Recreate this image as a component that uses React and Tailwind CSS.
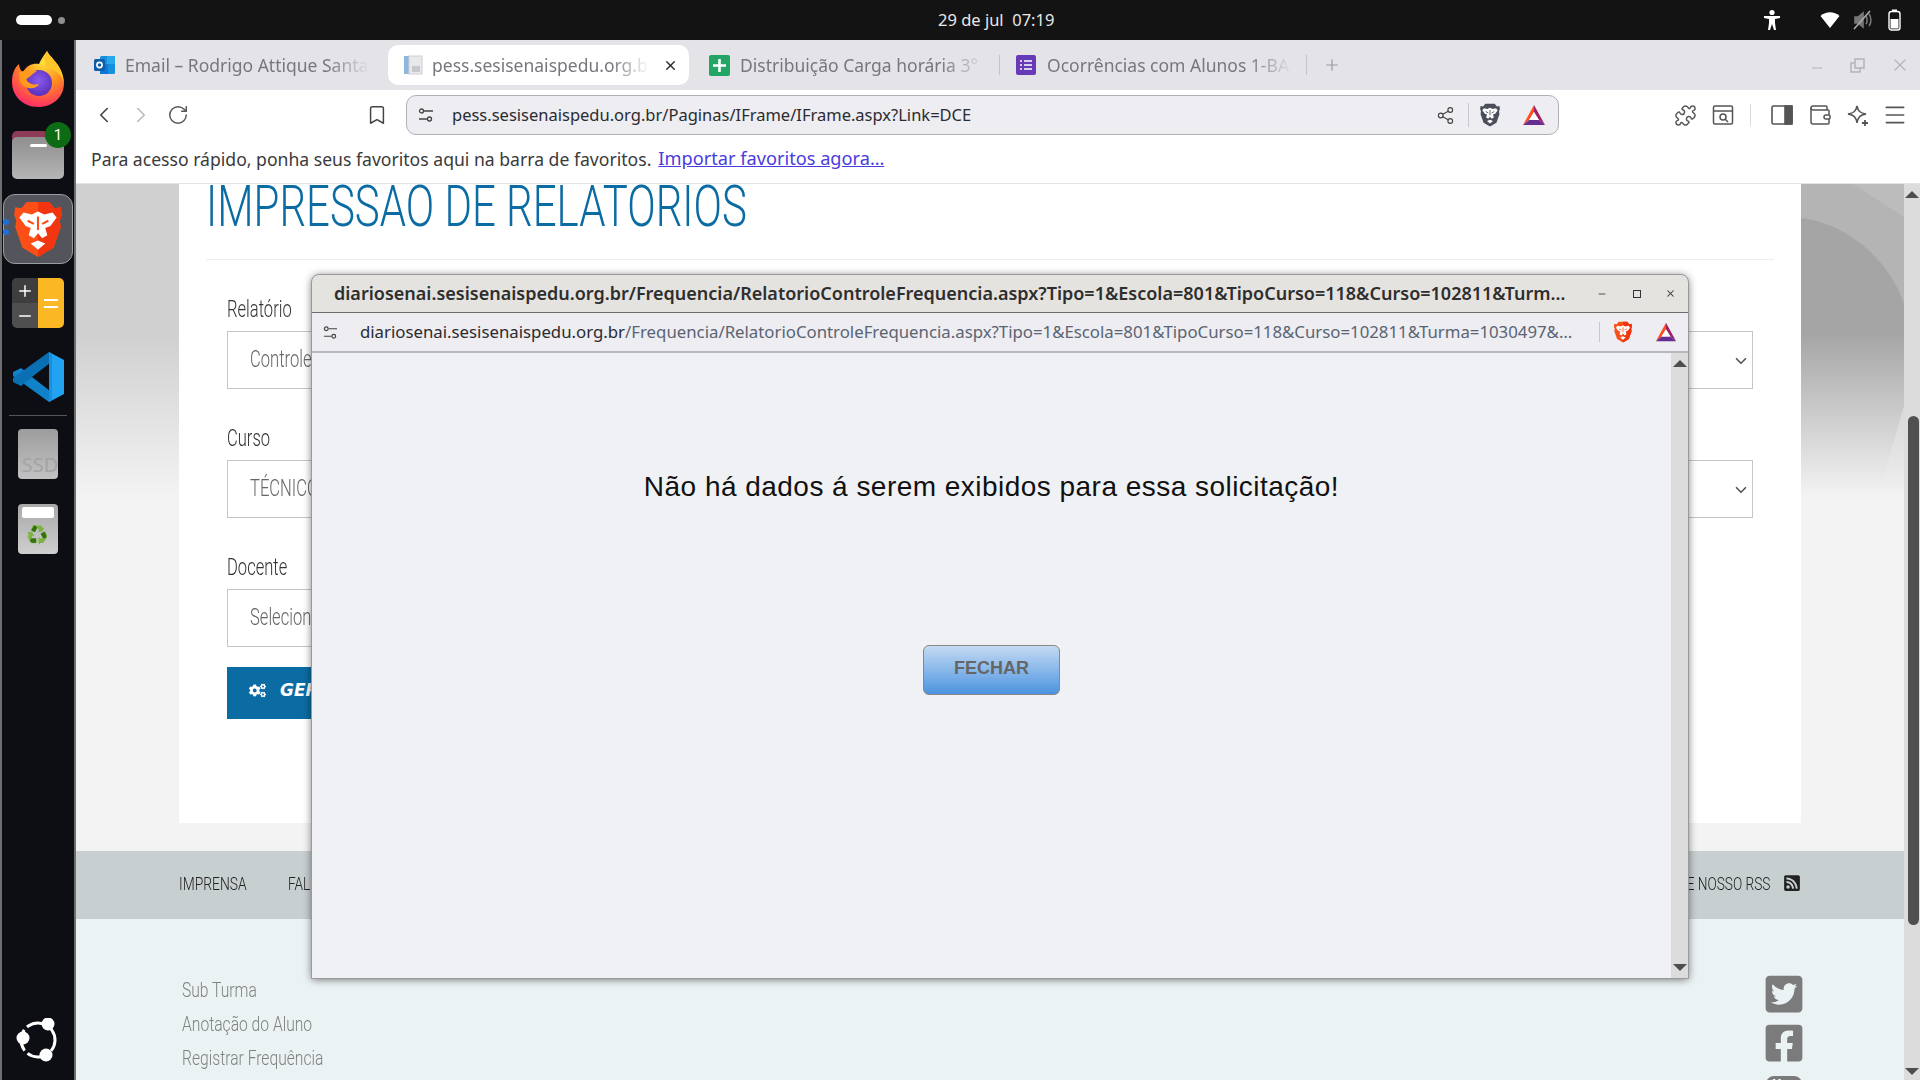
import React from "react";
import { ChevronLeft, ChevronRight, RotateCw, Bookmark, Share2, Puzzle, Wallet, Menu, X, Minus, Plus, ChevronDown } from "lucide-react";
import { FaTwitterSquare, FaFacebookSquare, FaRssSquare, FaCogs } from "react-icons/fa";

const ui = "font-['Noto_Sans',sans-serif]";
const narrow = "font-['Roboto',sans-serif] font-light";

function Narrow({ children, scale = "[transform:scaleX(0.72)]", className = "" }) {
  return <span className={`inline-block origin-left whitespace-nowrap ${scale} ${className}`}>{children}</span>;
}

function BraveLion({ size = 48, mono = false, cls = "" }) {
  const fill = mono ? "#4a4d5a" : "#fb4f17";
  return (
    <svg width={size} height={size} viewBox="0 0 48 56" className={cls}>
      <path d="M13 2 L35 2 L40 8 L46 7 L47 14 L45 20 L46 26 L39 46 L24 55 L9 46 L2 26 L3 20 L1 14 L2 7 L8 8 Z" fill={fill} />
      {!mono && <path d="M24 2 L35 2 L40 8 L46 7 L47 14 L45 20 L46 26 L39 46 L24 55 Z" fill="#f0350f" />}
      <path d="M24 11 L30 14 L38 12 L42 17 L36 25 L31 27 L33 34 L28 37 L24 32 L20 37 L15 34 L17 27 L12 25 L6 17 L10 12 L18 14 Z" fill="#fff" />
      <path d="M24 39 L31 42 L24 48 L17 42Z" fill="#fff" />
      <path d="M24 16 L24 29 M14 20 L20 23 M34 20 L28 23" stroke={fill} strokeWidth="2" fill="none" />
    </svg>
  );
}

function Bat({ size = 22, cls = "" }) {
  return (
    <svg width={size} height={size} viewBox="0 0 24 22" className={cls}>
      <polygon points="12,1 1,21 8,15 12,8" fill="#ff4f1f" />
      <polygon points="12,1 23,21 16,15 12,8" fill="#9e1f63" />
      <polygon points="1,21 23,21 17,16 7,16" fill="#662d91" />
      <polygon points="12,8 7,16 17,16" fill="#fff" />
    </svg>
  );
}

function SiteSettings({ size = 16 }) {
  return (
    <svg width={size} height={size} viewBox="0 0 16 16" fill="none" stroke="#444" strokeWidth="1.3">
      <circle cx="3.5" cy="4" r="2" />
      <path d="M6 4h9M1 12h8" />
      <circle cx="11.5" cy="12" r="2" />
    </svg>
  );
}

function Firefox() {
  return (
    <svg width="54" height="56" viewBox="0 0 54 56">
      <defs>
        <radialGradient id="ffa" cx="0.6" cy="0.2" r="0.95">
          <stop offset="0" stopColor="#ffe03a" />
          <stop offset="0.45" stopColor="#ff8a1f" />
          <stop offset="0.8" stopColor="#ff3a5c" />
          <stop offset="1" stopColor="#e3198c" />
        </radialGradient>
        <radialGradient id="ffb" cx="0.5" cy="0.4" r="0.6">
          <stop offset="0" stopColor="#8a5bf0" />
          <stop offset="1" stopColor="#5a2fb8" />
        </radialGradient>
      </defs>
      <path d="M36 0 C40 8 52 14 53 32 C53 46 42 56 27 56 C12 56 1 45 1 31 C1 24 3 17 8 13 C8 17 10 20 12 21 C16 14 22 12 28 13 C30 8 33 4 36 0Z" fill="url(#ffa)" />
      <circle cx="28" cy="32" r="13" fill="url(#ffb)" />
      <path d="M8 22 C14 18 20 20 26 20 C20 24 18 27 15 28 C18 34 24 34 28 33 C24 40 12 38 9 30Z" fill="#ff9a1f" />
      <path d="M36 0 C40 8 52 14 53 32 C51 24 44 18 36 17 C33 12 33 6 36 0Z" fill="#ffc629" />
    </svg>
  );
}

function Dock() {
  return (
    <div className="w-[76px] h-full shrink-0 flex flex-col items-center bg-[#0d0e13] border-x-2 border-[#6e6e6e]">
      <div className="mt-[10px] h-[58px] flex items-center justify-center"><Firefox /></div>
      <div className="relative mt-[23px] w-[52px] h-[48px]">
        <div className="absolute left-0 top-0 w-[36px] h-[14px] rounded-t-[5px] bg-[#8e3b57]" />
        <div className="absolute left-0 top-[6px] w-[52px] h-[42px] rounded-[5px] bg-gradient-to-b from-[#8f8f8f] to-[#b5b5b5] flex justify-center">
          <div className="mt-[7px] w-[17px] h-[3px] rounded bg-white" />
        </div>
        <div className="absolute -right-[7px] -top-[9px] w-[26px] h-[26px] rounded-full bg-[#0d6b14] text-white text-[15px] flex items-center justify-center font-['Roboto',sans-serif]">1</div>
      </div>
      <div className="relative mt-[15px] w-[70px] h-[70px] rounded-[12px] bg-[#54555c] border border-[#9b9ca2] flex items-center justify-center">
        <BraveLion size={58} />
        <div className="absolute -left-[1px] top-[24px] w-[6px] h-[6px] rounded-full bg-[#1c71d8]" />
        <div className="absolute -left-[1px] top-[34px] w-[6px] h-[6px] rounded-full bg-[#1c71d8]" />
      </div>
      <div className="mt-[14px] w-[52px] h-[50px] rounded-[5px] overflow-hidden flex">
        <div className="w-[26px] flex flex-col text-white text-center bg-[#4f4f4f]">
          <div className="h-[25px] bg-[#3e3e3e] flex items-center justify-center"><Plus size={18} strokeWidth={2} /></div>
          <div className="h-[25px] flex items-center justify-center"><Minus size={18} strokeWidth={2} /></div>
        </div>
        <div className="w-[26px] bg-[#fbb824] flex flex-col items-center justify-center gap-[5px]">
          <div className="w-[14px] h-[2px] bg-white" />
          <div className="w-[14px] h-[2px] bg-white" />
        </div>
      </div>
      <div className="mt-[23px] h-[52px] flex items-center justify-center">
        <svg width="52" height="50" viewBox="0 0 52 50">
          <polygon points="37,50 37,38 9,16 1,20 1,24 " fill="#1082c9" />
          <polygon points="37,0 37,12 9,34 1,30 1,26 " fill="#0b6fb3" />
          <polygon points="37,12 37,38 20,25" fill="#0d0e13" />
          <polygon points="37,0 52,8 52,42 37,50" fill="#22a3f1" />
          <polygon points="37,0 40,2 40,48 37,50" fill="#1a90dc" />
        </svg>
      </div>
      <div className="mt-[12px] w-[58px] h-px bg-[#555]" />
      <div className="mt-[13px] w-[40px] h-[50px] rounded-[4px] bg-gradient-to-b from-[#9d9d9d] to-[#c2c2c2] flex items-end justify-center overflow-hidden">
        <span className="ml-[4px] text-[#a4a4a4] text-[20px] leading-[28px] font-['Noto_Sans',sans-serif]">SSD</span>
      </div>
      <div className="mt-[25px] w-[40px] h-[50px] rounded-[4px] bg-gradient-to-b from-[#a8a8a8] to-[#cfcfcf] flex flex-col items-center">
        <div className="mt-[3px] w-[32px] h-[11px] bg-white rounded-[2px]" />
        <span className="mt-[5px] text-[#2a8f2a] text-[18px] leading-[22px]">♻</span>
      </div>
      <div className="mt-auto mb-[18px]">
        <svg width="44" height="44" viewBox="0 0 44 44">
          <circle cx="22" cy="22" r="17" fill="none" stroke="#fff" strokeWidth="3" strokeDasharray="22 4" transform="rotate(-35 22 22)" />
          <circle cx="7" cy="20" r="6.5" fill="#fff" />
          <circle cx="32" cy="6" r="6.5" fill="#fff" />
          <circle cx="30" cy="37" r="6.5" fill="#fff" />
        </svg>
      </div>
    </div>
  );
}

function TopBar() {
  return (
    <div className="h-[40px] shrink-0 bg-[#131313] flex items-center pl-[16px] pr-[19px] text-white">
      <div className="w-[36px] h-[10px] rounded-full bg-white" />
      <div className="ml-[6px] w-[7px] h-[7px] rounded-full bg-[#8f8f8f]" />
      <div className={`ml-[873px] w-[130px] text-[16.5px] text-[#e8e8e8] ${ui} whitespace-nowrap`}>29 de jul&nbsp; 07:19</div>
      <div className="ml-auto flex items-center">
        <svg width="18" height="22" viewBox="0 0 18 22" fill="#fff">
          <circle cx="9" cy="3.5" r="2.6" />
          <path d="M1 7h16v2l-5 1v4l1 7h-2l-2-6-2 6H5l1-7v-4L1 9z" />
        </svg>
        <svg className="ml-[39px]" width="20" height="18" viewBox="0 0 20 18">
          <path d="M0.5 5 C6 0 14 0 19.5 5 L10 17Z" fill="#fff" />
        </svg>
        <svg className="ml-[13px]" width="20" height="20" viewBox="0 0 20 20" fill="none" stroke="#777" strokeWidth="1.6">
          <path d="M2 7h3l5-4v14l-5-4H2z" fill="#777" />
          <path d="M13 6c1.5 2 1.5 6 0 8M16 4c2.5 3 2.5 9 0 12" />
          <path d="M1 19L17 1" stroke="#aaa" />
        </svg>
        <svg className="ml-[15px]" width="13" height="22" viewBox="0 0 13 22" fill="none">
          <rect x="1" y="2.5" width="11" height="18.5" rx="2.5" stroke="#fff" strokeWidth="1.4" />
          <rect x="4" y="0.5" width="5" height="2" fill="#fff" />
          <rect x="2.5" y="10" width="8" height="9.5" fill="#fff" />
        </svg>
      </div>
    </div>
  );
}

function Tab({ icon, label, active, w, textW, sep, gap = "ml-[10px]" }) {
  return (
    <div className={`h-[40px] shrink-0 flex items-center ${w} ${active ? "bg-white rounded-[10px]" : ""} pl-[14px] relative`}>
      {icon}
      <span className={`${gap} ${textW} overflow-hidden whitespace-nowrap text-[17.5px] text-[#77777d] ${ui} [mask-image:linear-gradient(to_right,black_82%,transparent)]`}>{label}</span>
      {active && <X size={15} strokeWidth={2.4} className="ml-[13px] text-[#333]" />}
      {sep && <div className="absolute right-0 top-[10px] w-px h-[20px] bg-[#c4c4ca]" />}
    </div>
  );
}

function TabStrip() {
  return (
    <div className="h-[50px] shrink-0 bg-[#e3e3e8] flex items-center pl-[16px] pr-[10px]">
      <div className="flex items-center w-[296px]">
        <Tab
          w="w-[296px]"
          textW="w-[245px]"
          label="Email – Rodrigo Attique Santa"
          icon={
            <svg width="21" height="20" viewBox="0 0 21 20" className="shrink-0 -ml-[12px]">
              <rect x="6" y="1" width="15" height="18" rx="1.5" fill="#1490df" />
              <rect x="13" y="1" width="8" height="8" fill="#28a8ea" />
              <rect x="6" y="9" width="8" height="10" fill="#0f78d4" />
              <rect x="0" y="4" width="11" height="12" rx="1.5" fill="#0f5ca8" />
              <circle cx="5.5" cy="10" r="2.6" fill="none" stroke="#fff" strokeWidth="1.6" />
            </svg>
          }
        />
      </div>
      <Tab
        active
        w="w-[301px]"
        textW="w-[218px]"
        gap="ml-[8px]"
        label="pess.sesisenaispedu.org.b"
        icon={
          <svg width="22" height="22" viewBox="0 0 22 22" className="shrink-0">
            <rect x="2" y="2" width="5" height="18" fill="#8fb6dc" />
            <rect x="7" y="2" width="13" height="18" fill="#e9e9ec" stroke="#cfcfd4" />
            <rect x="10" y="12" width="8" height="6" fill="#c8c8cc" />
          </svg>
        }
      />
      <Tab
        w="w-[311px]"
        textW="w-[245px]"
        label="Distribuição Carga horária 3°"
        sep
        icon={
          <svg width="21" height="21" viewBox="0 0 21 21" className="shrink-0 ml-[6px]">
            <rect width="21" height="21" rx="2" fill="#23a566" />
            <path d="M4 10.5h13M10.5 4v13" stroke="#fff" strokeWidth="2.6" fill="none" />
          </svg>
        }
      />
      <Tab
        w="w-[307px]"
        textW="w-[245px]"
        gap="ml-[11px]"
        label="Ocorrências com Alunos 1-BA"
        sep
        icon={
          <svg width="20" height="20" viewBox="0 0 20 20" className="shrink-0 ml-[2px]">
            <rect width="20" height="20" rx="2" fill="#673ab7" />
            <path d="M8 6h8M8 10h8M8 14h8" stroke="#fff" strokeWidth="1.6" />
            <path d="M4 6h2M4 10h2M4 14h2" stroke="#fff" strokeWidth="1.6" />
          </svg>
        }
      />
      <Plus size={18} strokeWidth={1.6} className="ml-[16px] text-[#9a9aa0]" />
      <div className="ml-auto flex items-center gap-[25px] text-[#b4b4b8]">
        <Minus size={16} strokeWidth={1.5} className="mt-[6px]" />
        <svg width="15" height="15" viewBox="0 0 15 15" fill="none" stroke="#b4b4b8" strokeWidth="1.5">
          <rect x="5" y="1" width="9" height="9" />
          <path d="M5 5H1v9h9v-4" />
        </svg>
        <X size={20} strokeWidth={1.4} />
      </div>
    </div>
  );
}

function Toolbar() {
  return (
    <div className="h-[45px] shrink-0 bg-white flex items-center pl-[15px] pt-[5px] text-[#555]">
      <ChevronLeft size={26} strokeWidth={1.5} className="text-[#444]" />
      <ChevronRight size={26} strokeWidth={1.5} className="ml-[11px] text-[#bbb]" />
      <RotateCw size={22} strokeWidth={1.6} className="ml-[13px] text-[#555]" />
      <Bookmark size={22} strokeWidth={1.6} className="ml-[177px] text-[#444]" />
      <div className="ml-[18px] w-[1153px] h-[40px] rounded-[10px] bg-[#ededf2] border border-[#b0b0b5] flex items-center pl-[11px] pr-[12px]">
        <SiteSettings />
        <span className={`ml-[18px] text-[16.5px] text-[#2b2b30] whitespace-nowrap ${ui}`}>pess.sesisenaispedu.org.br/Paginas/IFrame/IFrame.aspx?Link=DCE</span>
        <Share2 size={19} strokeWidth={1.4} className="ml-auto text-[#444]" />
        <div className="ml-[13px] w-px h-[24px] bg-[#c8c8cc]" />
        <BraveLion size={24} mono cls="ml-[9px]" />
        <Bat size={24} cls="ml-[20px]" />
      </div>
      <Puzzle size={23} strokeWidth={1.5} className="ml-[115px]" />
      <svg className="ml-[15px]" width="22" height="22" viewBox="0 0 22 22" fill="none" stroke="#555" strokeWidth="1.5">
        <rect x="1.5" y="2" width="19" height="18" rx="1.5" />
        <path d="M1.5 7h19" />
        <circle cx="11" cy="13" r="3" />
        <path d="M13 15l3 3" />
      </svg>
      <div className="ml-[16px] w-px h-[22px] bg-[#dcdcdf]" />
      <svg className="ml-[20px]" width="22" height="22" viewBox="0 0 22 22" fill="none" stroke="#555" strokeWidth="1.6">
        <rect x="1" y="2" width="20" height="18" rx="1.5" />
        <rect x="14" y="2" width="7" height="18" fill="#555" />
      </svg>
      <Wallet size={24} strokeWidth={1.5} className="ml-[15px]" />
      <svg className="ml-[14px]" width="23" height="23" viewBox="0 0 23 23" fill="none" stroke="#555" strokeWidth="1.5">
        <path d="M11 2c1 5 3 7 9 8-6 1-8 3-9 9-1-6-3-8-9-9 6-1 8-3 9-8z" />
        <path d="M19 16v6M16 19h6" strokeWidth="1.8" />
      </svg>
      <Menu size={26} strokeWidth={1.5} className="ml-[13px]" />
    </div>
  );
}

function BookmarksBar() {
  return (
    <div className={`h-[49px] shrink-0 bg-white border-b border-[#e4e4e4] flex items-center pl-[15px] text-[17.6px] ${ui} text-[#3a3a3a] whitespace-nowrap`}>
      Para acesso rápido, ponha seus favoritos aqui na barra de favoritos.
      <span className="ml-[7px] text-[18.2px] text-[#4a3ce0] underline">Importar favoritos agora…</span>
    </div>
  );
}

function Field({ label, value, width = "w-full" }) {
  return (
    <div>
      <div className={`h-[44px] pt-[2px] flex items-center text-[23px] text-[#333] ${narrow}`}><Narrow>{label}</Narrow></div>
      <div className={`h-[58px] ${width} border border-[#c6c6c6] bg-white flex items-center pl-[22px] pr-[3px] text-[23px] text-[#666] ${narrow}`}>
        <Narrow>{value}</Narrow>
        <ChevronDown size={18} strokeWidth={2.2} className="ml-auto text-[#555] -mr-[1px] mt-[2px]" />
      </div>
    </div>
  );
}

function PageBackdrop() {
  return (
    <svg className="absolute right-0 top-0" width="103" height="312" viewBox="0 0 103 312" preserveAspectRatio="none">
      <defs>
        <linearGradient id="rbg" x1="0" y1="0" x2="0" y2="1">
          <stop offset="0" stopColor="#a5a5a5" />
          <stop offset="0.48" stopColor="#a5a5a5" />
          <stop offset="1" stopColor="#f3f3f3" />
        </linearGradient>
        <linearGradient id="rstreak" x1="0" y1="0" x2="0" y2="1">
          <stop offset="0" stopColor="#ffffff" stopOpacity="0.35" />
          <stop offset="1" stopColor="#ffffff" stopOpacity="0" />
        </linearGradient>
      </defs>
      <rect width="103" height="312" fill="url(#rbg)" />
      <path d="M0 0H103V120C90 80 50 40 0 34Z" fill="#b4b4b4" />
      <path d="M52 0H103V33Z" fill="#bcbcbc" />
      <path d="M103 222L79 306H103Z" fill="url(#rstreak)" />
    </svg>
  );
}

function Page() {
  return (
    <div className="flex-1 min-h-0 flex">
      <div className="relative flex-1 min-w-0 overflow-hidden bg-[#f3f3f3] flex flex-col">
        <div className="absolute left-0 top-0 w-[103px] h-[312px] bg-[linear-gradient(to_bottom,#d0d0d0_0%,#d0d0d0_48%,#f3f3f3_100%)]" />
        <PageBackdrop />
        <div className="relative ml-[103px] mr-[103px] h-[639px] shrink-0 bg-white pl-[27px] pr-[27px]">
          <div className={`h-[76px] border-b border-[#eeeeee] text-[#0b6ca3] text-[58px] leading-[44px] overflow-hidden ${narrow}`}>
            <Narrow scale="[transform:scaleX(0.724)]">IMPRESSAO DE RELATORIOS</Narrow>
          </div>
          <div className="pl-[21px] pr-[21px] pt-[27px] flex flex-col gap-[27px]">
            <Field label="Relatório" value="Controle de Frequência" />
            <Field label="Curso" value="TÉCNICO EM ELETROTÉCNICA" />
            <Field label="Docente" value="Selecione" width="w-[1000px]" />
          </div>
          <div className="ml-[21px] mt-[20px] w-[220px] h-[52px] bg-[#0b6ca3] text-white flex items-center pl-[22px] pb-[5px]">
            <FaCogs size={17} />
            <span className="ml-[14px] font-['DejaVu_Sans',sans-serif] font-bold italic text-[17px]">GERAR</span>
          </div>
        </div>
        <div className="relative mt-[28px] h-[68px] shrink-0 bg-[#c8cfd1] flex items-center pl-[103px] pr-[103px] text-[18px] text-[#222] font-['Roboto',sans-serif] font-light pb-[4px]">
          <Narrow scale="[transform:scaleX(0.77)]" className="w-[109px]">IMPRENSA</Narrow>
          <Narrow scale="[transform:scaleX(0.76)]">FALE CONOSCO</Narrow>
          <span className="ml-auto flex items-center">
            <span className="whitespace-nowrap inline-block origin-right [transform:scaleX(0.76)]">ASSINE NOSSO RSS</span>
            <FaRssSquare size={18} className="ml-[13px] text-[#222]" />
          </span>
        </div>
        <div className="relative flex-1 bg-[#ebf2f4] pl-[106px] pr-[99px] pt-[57px] flex justify-between">
          <div className={`flex flex-col gap-[6px] text-[21px] leading-[28px] text-[#808080] ${narrow}`}>
            <Narrow scale="[transform:scaleX(0.745)]">Sub Turma</Narrow>
            <Narrow scale="[transform:scaleX(0.745)]">Anotação do Aluno</Narrow>
            <Narrow scale="[transform:scaleX(0.745)]">Registrar Frequência</Narrow>
          </div>
          <div className="flex flex-col gap-[7px] -mt-[3px] text-[#7b7b7b]">
            <FaTwitterSquare size={42} />
            <FaFacebookSquare size={42} />
            <div className="ml-[3px] w-[36px] h-[40px] mt-[5px] rounded-[8px] bg-[#7b7b7b] text-center text-white font-['Roboto',sans-serif] font-bold text-[13px] leading-[16px]">You</div>
          </div>
        </div>
      </div>
      <Scrollbar />
    </div>
  );
}

function Scrollbar() {
  return (
    <div className="relative w-[16px] shrink-0 bg-[#dcdcdc]">
      <div className="absolute left-[1px] top-[7px] w-0 h-0 border-x-[7px] border-x-transparent border-b-[7px] border-b-[#4d4d4d]" />
      <div className="absolute left-[4px] top-[232px] w-[11px] h-[509px] rounded-full bg-[#505050]" />
      <div className="absolute left-[1px] bottom-[5px] w-0 h-0 border-x-[7px] border-x-transparent border-t-[7px] border-t-[#4d4d4d]" />
    </div>
  );
}

function Popup() {
  return (
    <div className="absolute left-[312px] top-[275px] w-[1376px] h-[703px] rounded-t-[7px] overflow-hidden shadow-[0_1px_8px_rgba(0,0,0,0.6)] flex flex-col bg-[#f0f1f5] outline outline-1 outline-[#9a9a9a]">
      <div className="h-[38px] shrink-0 bg-[#e5e3df] border-b border-[#6e6a66] flex items-center pl-[22px] pr-[12px]">
        <span className={`text-[18px] font-semibold text-[#2e2e2e] whitespace-nowrap ${ui}`}>diariosenai.sesisenaispedu.org.br/Frequencia/RelatorioControleFrequencia.aspx?Tipo=1&amp;Escola=801&amp;TipoCurso=118&amp;Curso=102811&amp;Turm…</span>
        <Minus size={10} strokeWidth={2} className="ml-auto text-[#333]" />
        <div className="ml-[26px] w-[8px] h-[8px] border border-[#333]" />
        <X size={11} strokeWidth={2.2} className="ml-[24px] text-[#333]" />
      </div>
      <div className="h-[40px] shrink-0 bg-[#ededf2] border-b-2 border-[#b8b8bc] flex items-center pl-[11px] pr-[11px]">
        <SiteSettings size={15} />
        <span className={`ml-[22px] w-[1217px] text-[16.8px] whitespace-nowrap overflow-hidden text-[#5a6472] ${ui}`}>
          <span className="text-[#2b2b30]">diariosenai.sesisenaispedu.org.br</span>/Frequencia/RelatorioControleFrequencia.aspx?Tipo=1&amp;Escola=801&amp;TipoCurso=118&amp;Curso=102811&amp;Turma=1030497&amp;…
        </span>
        <div className="ml-[24px] w-px h-[20px] bg-[#c8c8cc]" />
        <BraveLion size={22} cls="ml-[12px]" />
        <Bat size={22} cls="ml-[21px]" />
      </div>
      <div className="flex-1 min-h-0 flex">
        <div className="flex-1 flex flex-col items-center">
          <div className="mt-[119px] font-['Liberation_Sans',sans-serif] text-[28px] tracking-[0.47px] text-[#111] leading-[30px] whitespace-nowrap">Não há dados á serem exibidos para essa solicitação!</div>
          <div className="mt-[143px] w-[137px] h-[50px] rounded-[6px] border border-[#888] bg-gradient-to-b from-[#c4daf3] to-[#4a93df] flex items-center justify-center pb-[3px] font-['Liberation_Sans',sans-serif] font-bold text-[18px] text-[#666]">FECHAR</div>
        </div>
        <div className="relative w-[17px] bg-[#dcdcdc]">
          <div className="absolute left-[2px] top-[7px] w-0 h-0 border-x-[7px] border-x-transparent border-b-[7px] border-b-[#4d4d4d]" />
          <div className="absolute left-[2px] bottom-[7px] w-0 h-0 border-x-[7px] border-x-transparent border-t-[7px] border-t-[#4d4d4d]" />
        </div>
      </div>
    </div>
  );
}

export default function App() {
  return (
    <div className="relative w-[1920px] h-[1080px] overflow-hidden bg-white flex flex-col">
      <TopBar />
      <div className="flex-1 min-h-0 flex">
        <Dock />
        <div className="flex-1 min-w-0 flex flex-col">
          <TabStrip />
          <Toolbar />
          <BookmarksBar />
          <Page />
        </div>
      </div>
      <Popup />
    </div>
  );
}
